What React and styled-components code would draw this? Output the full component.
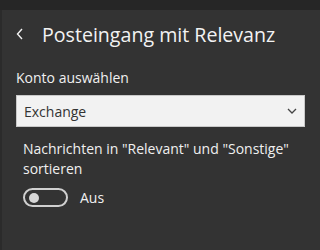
import React from 'react'
import styled, { createGlobalStyle } from 'styled-components'

const GlobalStyle = createGlobalStyle`
  html, body {
    margin: 0;
    padding: 0;
    background: #333333;
  }
  body {
    font-family: 'Open Sans', 'Noto Sans', sans-serif;
    color: #f2f2f2;
  }
`

const Page = styled.div`
  width: 320px;
  height: 250px;
  display: flex;
  flex-direction: column;
  background: #333333;
  overflow: hidden;
`

const TopBar = styled.div`
  height: 10px;
  background: #262626;
`

const Panel = styled.div`
  flex: 1;
  display: flex;
  flex-direction: column;
  border-left: 2px solid #2b2b2b;
  padding: 0 14px;
`

const Header = styled.div`
  display: flex;
  align-items: center;
  height: 48px;
  gap: 18px;
`

const BackButton = styled.button`
  background: none;
  border: 0;
  padding: 0;
  width: 8px;
  height: 24px;
  display: flex;
  align-items: center;
  color: #f2f2f2;
`

const Title = styled.h1`
  margin: 0;
  font-size: 19.6px;
  font-weight: 400;
  color: #f2f2f2;
`

const Label = styled.div`
  margin-top: 10px;
  font-size: 14px;
  color: #f0f0f0;
`

const SelectWrap = styled.div`
  position: relative;
  margin-top: 8px;
  width: 289px;
`

const Select = styled.select`
  appearance: none;
  width: 100%;
  height: 32px;
  box-sizing: border-box;
  padding: 0 28px 0 7px;
  background: #f2f2f2;
  border: 1px solid #c9c9c9;
  border-radius: 0;
  font-family: 'Open Sans', 'Noto Sans', sans-serif;
  font-size: 14px;
  color: #333333;
`

const Chevron = styled.svg`
  position: absolute;
  right: 8px;
  top: 13px;
  pointer-events: none;
`

const Description = styled.p`
  margin: 12px 0 0 7px;
  font-size: 14px;
  line-height: 20px;
  color: #f0f0f0;
`

const ToggleRow = styled.div`
  display: flex;
  align-items: center;
  gap: 12px;
  margin: 9px 0 0 7px;
`

const Toggle = styled.div`
  width: 45px;
  height: 19px;
  box-sizing: border-box;
  border: 2px solid #d0d0d0;
  border-radius: 10px;
  display: flex;
  align-items: center;
  padding: 0 4px;
  justify-content: ${({ $on }) => ($on ? 'flex-end' : 'flex-start')};
`

const Knob = styled.span`
  width: 10px;
  height: 10px;
  border-radius: 50%;
  background: #d6d6d6;
`

const ToggleText = styled.span`
  font-size: 14px;
  color: #f0f0f0;
`

const App = () => {
  return (
    <Page>
      <GlobalStyle />
      <TopBar />
      <Panel>
        <Header>
          <BackButton aria-label='Zurück'>
            <svg width='8' height='12' viewBox='0 0 8 12'>
              <path d='M6 1 L1.5 6 L6 11' fill='none' stroke='#f2f2f2' strokeWidth='1.4' />
            </svg>
          </BackButton>
          <Title>Posteingang mit Relevanz</Title>
        </Header>

        <Label>Konto auswählen</Label>
        <SelectWrap>
          <Select defaultValue='Exchange'>
            <option>Exchange</option>
          </Select>
          <Chevron width='10' height='6' viewBox='0 0 10 6'>
            <path d='M1 1 L5 5 L9 1' fill='none' stroke='#444' strokeWidth='1.3' />
          </Chevron>
        </SelectWrap>

        <Description>Nachrichten in "Relevant" und "Sonstige" sortieren</Description>
        <ToggleRow>
          <Toggle $on={false}>
            <Knob />
          </Toggle>
          <ToggleText>Aus</ToggleText>
        </ToggleRow>
      </Panel>
    </Page>
  )
}

export default App
